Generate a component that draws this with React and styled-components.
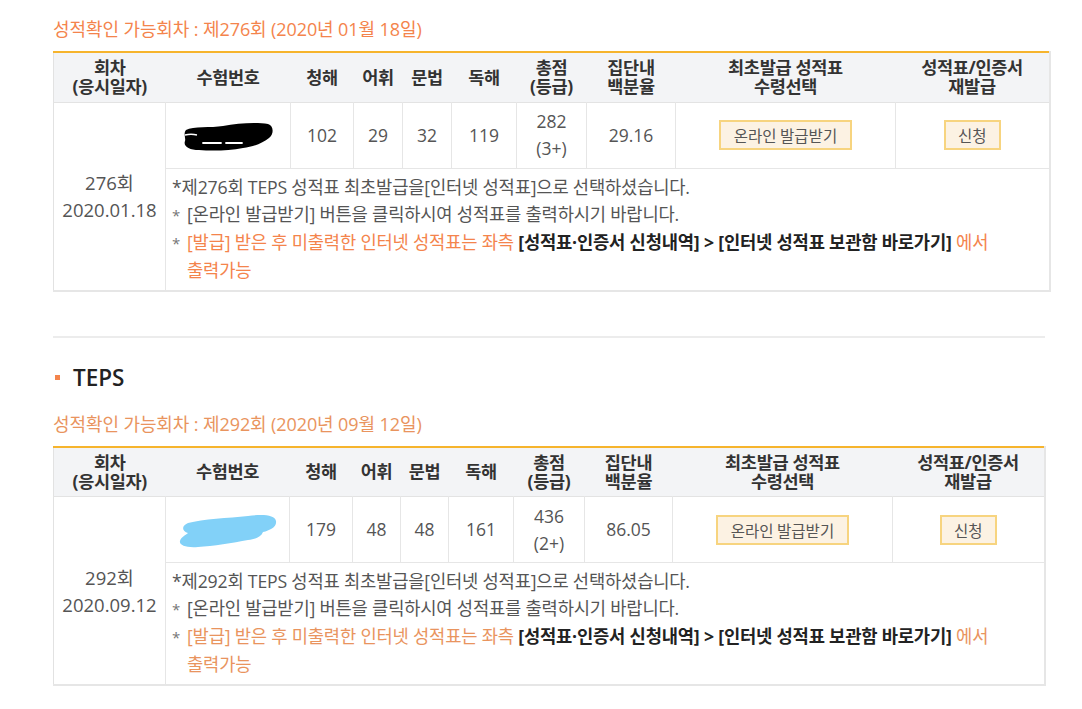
import React from "react";
import styled, { createGlobalStyle } from "styled-components";

const GlobalStyle = createGlobalStyle`
  html, body { margin: 0; padding: 0; background: #fff; }
  body {
    font-family: "Open Sans", "Noto Sans CJK KR", sans-serif;
    color: #555;
    -webkit-font-smoothing: antialiased;
  }
`;

const Page = styled.div`
  padding: 17px 0 40px 53px;
`;

const AvailTitle = styled.h3`
  margin: 0 0 ${(p) => p.$gap}px;
  font-size: 18px;
  line-height: 24px;
  font-weight: 400;
  color: ${(p) => p.$accent};
  letter-spacing: -0.1px;
`;

const Table = styled.table`
  width: ${(p) => p.$width}px;
  table-layout: fixed;
  border-collapse: collapse;
  border-top: 2px solid #f6b42d;
  border-left: 1px solid #e2e2e2;
  border-right: 2px solid #e6e6e6;
  border-bottom: 2px solid #e6e6e6;
`;

const Col = styled.col`
  width: ${(p) => p.$w}px;
`;

const HeadRow = styled.tr`
  height: 50px;
  background: #f3f4f6;
  border-bottom: 1px solid #e3e3e3;
`;

const HeadCell = styled.th`
  padding: 0;
  font-size: 17.5px;
  line-height: 19px;
  font-weight: 700;
  color: #333;
  text-align: center;
  vertical-align: middle;
  letter-spacing: -0.3px;
`;

const DataRow = styled.tr`
  height: 66px;
`;

const Cell = styled.td`
  padding: 0;
  border: 1px solid #e6e6e6;
  border-top: 0;
  text-align: center;
  vertical-align: middle;
  font-size: 17.5px;
  line-height: 27px;
  color: #555;
`;

const RoundCell = styled(Cell)`
  border-left: 0;
  font-size: 18.5px;
`;

const NotesCell = styled.td`
  padding: 5px 8px 6px 6px;
  border-left: 1px solid #e6e6e6;
  vertical-align: top;
  text-align: left;
  font-size: 17.7px;
  line-height: 27px;
  color: #555;
`;

const Note = styled.div`
  padding-left: 15px;
  text-indent: -15px;
  letter-spacing: -0.2px;
  white-space: nowrap;
`;

const Star = styled.span`
  display: inline-block;
  width: 15px;
  text-indent: 0;
  font-size: 15px;
  color: #777;
`;

const Accent = styled.span`
  color: ${(p) => p.$accent};
`;

const Strong = styled.b`
  color: #222;
  font-weight: 700;
`;

const Btn = styled.button`
  height: 30px;
  padding: 0 ${(p) => p.$pad}px;
  border: 2px solid #f7d47f;
  background: #fcf2e3;
  color: #555;
  font-family: "Noto Sans CJK KR", sans-serif;
  font-size: 15.5px;
  line-height: 26px;
  cursor: pointer;
`;

const Divider = styled.div`
  margin-top: 44px;
  width: 992px;
  height: 2px;
  background: #ececec;
`;

const Heading = styled.h2`
  display: flex;
  align-items: center;
  gap: 13px;
  margin: 25px 0 19px 2px;
  font-size: 22.5px;
  line-height: 30px;
  font-weight: 600;
  color: #222;
`;

const Bullet = styled.span`
  width: 5px;
  height: 5px;
  background: #f4844c;
`;

const BlobSvg = styled.svg`
  display: block;
  margin: 2px auto 0;
`;

function Blob({ kind }) {
  if (kind === "black") {
    return (
      <BlobSvg width="94" height="31" viewBox="0 0 94 31">
        <path
          d="M5,9 C12,5 30,7 42,5 C57,2 76,1 87,3 C93,5 93,13 88,17 C82,22 72,26 62,27 C47,30 30,30 18,29 C8,29 2,25 4,20 C5,17 2,13 5,9 Z"
          fill="#000"
        />
        <path d="M4,14 C8,13 12,13 16,14" stroke="#fff" strokeWidth="1.4" fill="none" />
        <path d="M22,22 L40,22 M45,22 L61,22" stroke="#fff" strokeWidth="1.8" strokeLinecap="round" />
      </BlobSvg>
    );
  }
  return (
    <BlobSvg width="100" height="36" viewBox="0 0 100 36">
      <path
        d="M10,10 C25,6 50,5 70,3 C85,1 97,2 98,8 C99,14 92,17 85,19 C83,24 78,26 70,27 C55,30 35,33 20,34 C8,35 1,32 2,28 C3,24 8,22 10,20 C4,18 3,13 10,10 Z"
        fill="#82d1f8"
      />
    </BlobSvg>
  );
}

const HEADERS = [
  ["회차", "(응시일자)"],
  ["수험번호"],
  ["청해"],
  ["어휘"],
  ["문법"],
  ["독해"],
  ["총점", "(등급)"],
  ["집단내", "백분율"],
  ["최초발급 성적표", "수령선택"],
  ["성적표/인증서", "재발급"],
];

const SECTIONS = [
  {
    accent: "#f4844c",
    title: "성적확인 가능회차 : 제276회 (2020년 01월 18일)",
    no: "276",
    date: "2020.01.18",
    scores: ["102", "29", "32", "119"],
    total: "282",
    grade: "(3+)",
    pct: "29.16",
    blob: "black",
    cols: [112, 125, 63, 49, 49, 65, 70, 89, 220, 154],
  },
  {
    accent: "#e9945e",
    title: "성적확인 가능회차 : 제292회 (2020년 09월 12일)",
    no: "292",
    date: "2020.09.12",
    scores: ["179", "48", "48", "161"],
    total: "436",
    grade: "(2+)",
    pct: "86.05",
    blob: "blue",
    cols: [112, 124, 63, 48, 48, 65, 71, 88, 220, 152],
  },
];

function ScoreSection({ s, gap }) {
  const width = s.cols.reduce((a, b) => a + b, 0);
  return (
    <section>
      <AvailTitle $accent={s.accent} $gap={gap}>{s.title}</AvailTitle>
      <Table $width={width}>
        <colgroup>
          {s.cols.map((w, i) => (
            <Col key={i} $w={w} />
          ))}
        </colgroup>
        <thead>
          <HeadRow>
            {HEADERS.map((h, i) => (
              <HeadCell key={i}>
                {h[0]}
                {h[1] && (
                  <>
                    <br />
                    {h[1]}
                  </>
                )}
              </HeadCell>
            ))}
          </HeadRow>
        </thead>
        <tbody>
          <DataRow>
            <RoundCell rowSpan={2}>
              {s.no}회
              <br />
              {s.date}
            </RoundCell>
            <Cell>
              <Blob kind={s.blob} />
            </Cell>
            {s.scores.map((v, i) => (
              <Cell key={i}>{v}</Cell>
            ))}
            <Cell>
              {s.total}
              <br />
              {s.grade}
            </Cell>
            <Cell>{s.pct}</Cell>
            <Cell>
              <Btn $pad={13}>온라인 발급받기</Btn>
            </Cell>
            <Cell>
              <Btn $pad={12}>신청</Btn>
            </Cell>
          </DataRow>
          <tr>
            <NotesCell colSpan={9}>
              <Note>*제{s.no}회 TEPS 성적표 최초발급을[인터넷 성적표]으로 선택하셨습니다.</Note>
              <Note>
                <Star>*</Star>[온라인 발급받기] 버튼을 클릭하시여 성적표를 출력하시기 바랍니다.
              </Note>
              <Note>
                <Star>*</Star>
                <Accent $accent={s.accent}>[발급] 받은 후 미출력한 인터넷 성적표는 좌측 </Accent>
                <Strong>[성적표·인증서 신청내역] &gt; [인터넷 성적표 보관함 바로가기]</Strong>
                <Accent $accent={s.accent}> 에서</Accent>
                <br />
                <Accent $accent={s.accent}>출력가능</Accent>
              </Note>
            </NotesCell>
          </tr>
        </tbody>
      </Table>
    </section>
  );
}

export default function App() {
  return (
    <>
      <GlobalStyle />
      <Page>
        <ScoreSection s={SECTIONS[0]} gap={10} />
        <Divider />
        <Heading>
          <Bullet />
          TEPS
        </Heading>
        <ScoreSection s={SECTIONS[1]} gap={10} />
      </Page>
    </>
  );
}
